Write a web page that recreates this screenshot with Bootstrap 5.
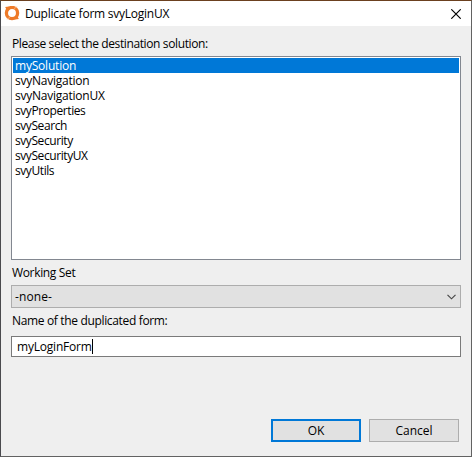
<!DOCTYPE html>
<html lang="en">
<head>
<meta charset="utf-8">
<meta name="viewport" content="width=device-width, initial-scale=1">
<title>Duplicate form svyLoginUX</title>
<link href="https://cdn.jsdelivr.net/npm/bootstrap@5.3.0/dist/css/bootstrap.min.css" rel="stylesheet">
<style>
body{font:12px/15px "Open Sans","Noto Sans",sans-serif;color:#000;background:#efefef;letter-spacing:-.2px}
.dialog-window{width:472px;height:457px;border:1px solid #626262;border-top-color:#6b401f;border-left-color:#4a4a4e;background:#efefef}
.title-bar{height:25px;padding:0 10px 0 3px}
.title-text{margin-left:5px;letter-spacing:-.24px}
.dialog-content{padding:10px 10px 0}
.field-label{height:15px;padding-left:1px;letter-spacing:-.38px}
.solution-list{height:204px;margin-top:5px;padding:1px;border:1px solid #828790;background:#fff;border-radius:0}
.solution-list .list-group-item{height:15px;padding:0 2px;border:0;color:#000;line-height:15px;letter-spacing:-.42px;background:#fff}
.solution-list .list-group-item.active{background:#0078d7;color:#fff;margin:0;letter-spacing:-.2px}
.solution-list .wide-item{letter-spacing:-.24px}
.field-label.set-label{margin-top:5px;letter-spacing:-.34px}
.set-select{height:23px;margin-top:5px;padding:0 4px 0 3px;border:1px solid #adadad;background:#e1e1e1;letter-spacing:.1px}
.name-label{margin-top:5px;letter-spacing:-.34px}
.name-field{height:21px;margin-top:8px;padding-left:5px;border:1px solid #7a7a7a;background:#fff}
.caret-bar{width:1px;height:15px;background:#000}
.button-row{margin-top:62px;padding-right:2px;gap:8px}
.btn.dialog-btn{width:90px;height:23px;padding:0;border:1px solid #adadad;border-radius:0;background:#e1e1e1;color:#000;font-size:12px;line-height:21px}
.btn.dialog-btn.default-btn{border:2px solid #0078d7;line-height:19px}
</style>
<script src="https://cdn.jsdelivr.net/npm/bootstrap@5.3.0/dist/js/bootstrap.bundle.min.js"></script>
</head>
<body class="overflow-hidden">
<main class="dialog-window">
  <header class="title-bar d-flex align-items-center bg-white">
    <svg width="16" height="16" viewBox="0 0 16 16" aria-hidden="true">
      <circle cx="8" cy="7" r="5.6" fill="none" stroke="#ee7a28" stroke-width="3.3"/>
      <path d="M1.2 1 5 .4 2.6 4zM14.8 13 11 13.6 13.4 10z" fill="#ee7a28"/>
      <path d="M10 2.6 13.2.8M6 11.4 2.8 13.2" stroke="#f8b98b" stroke-width=".8"/>
    </svg>
    <span class="title-text">Duplicate form svyLoginUX</span>
    <svg class="ms-auto" width="10" height="10" viewBox="0 0 10 10" aria-label="Close"><path d="M.3.3 9.7 9.7M9.7.3.3 9.7" stroke="#000" stroke-width="1.15"/></svg>
  </header>
  <div class="dialog-content d-flex flex-column">
    <div class="field-label">Please select the destination solution:</div>
    <ul class="solution-list list-group">
      <li class="list-group-item active">mySolution</li>
      <li class="list-group-item wide-item">svyNavigation</li>
      <li class="list-group-item wide-item">svyNavigationUX</li>
      <li class="list-group-item">svyProperties</li>
      <li class="list-group-item">svySearch</li>
      <li class="list-group-item">svySecurity</li>
      <li class="list-group-item">svySecurityUX</li>
      <li class="list-group-item">svyUtils</li>
    </ul>
    <div class="field-label set-label">Working Set</div>
    <div class="set-select d-flex align-items-center justify-content-between">
      <span>-none-</span>
      <svg width="9" height="6" viewBox="0 0 9 6" aria-hidden="true"><path d="M.5.8 4.5 4.8 8.5.8" fill="none" stroke="#444" stroke-width="1.15"/></svg>
    </div>
    <div class="field-label name-label">Name of the duplicated form:</div>
    <div class="name-field d-flex align-items-center"><span>myLoginForm</span><span class="caret-bar"></span></div>
    <div class="button-row d-flex justify-content-end">
      <button type="button" class="btn dialog-btn default-btn">OK</button>
      <button type="button" class="btn dialog-btn">Cancel</button>
    </div>
  </div>
</main>
</body>
</html>
